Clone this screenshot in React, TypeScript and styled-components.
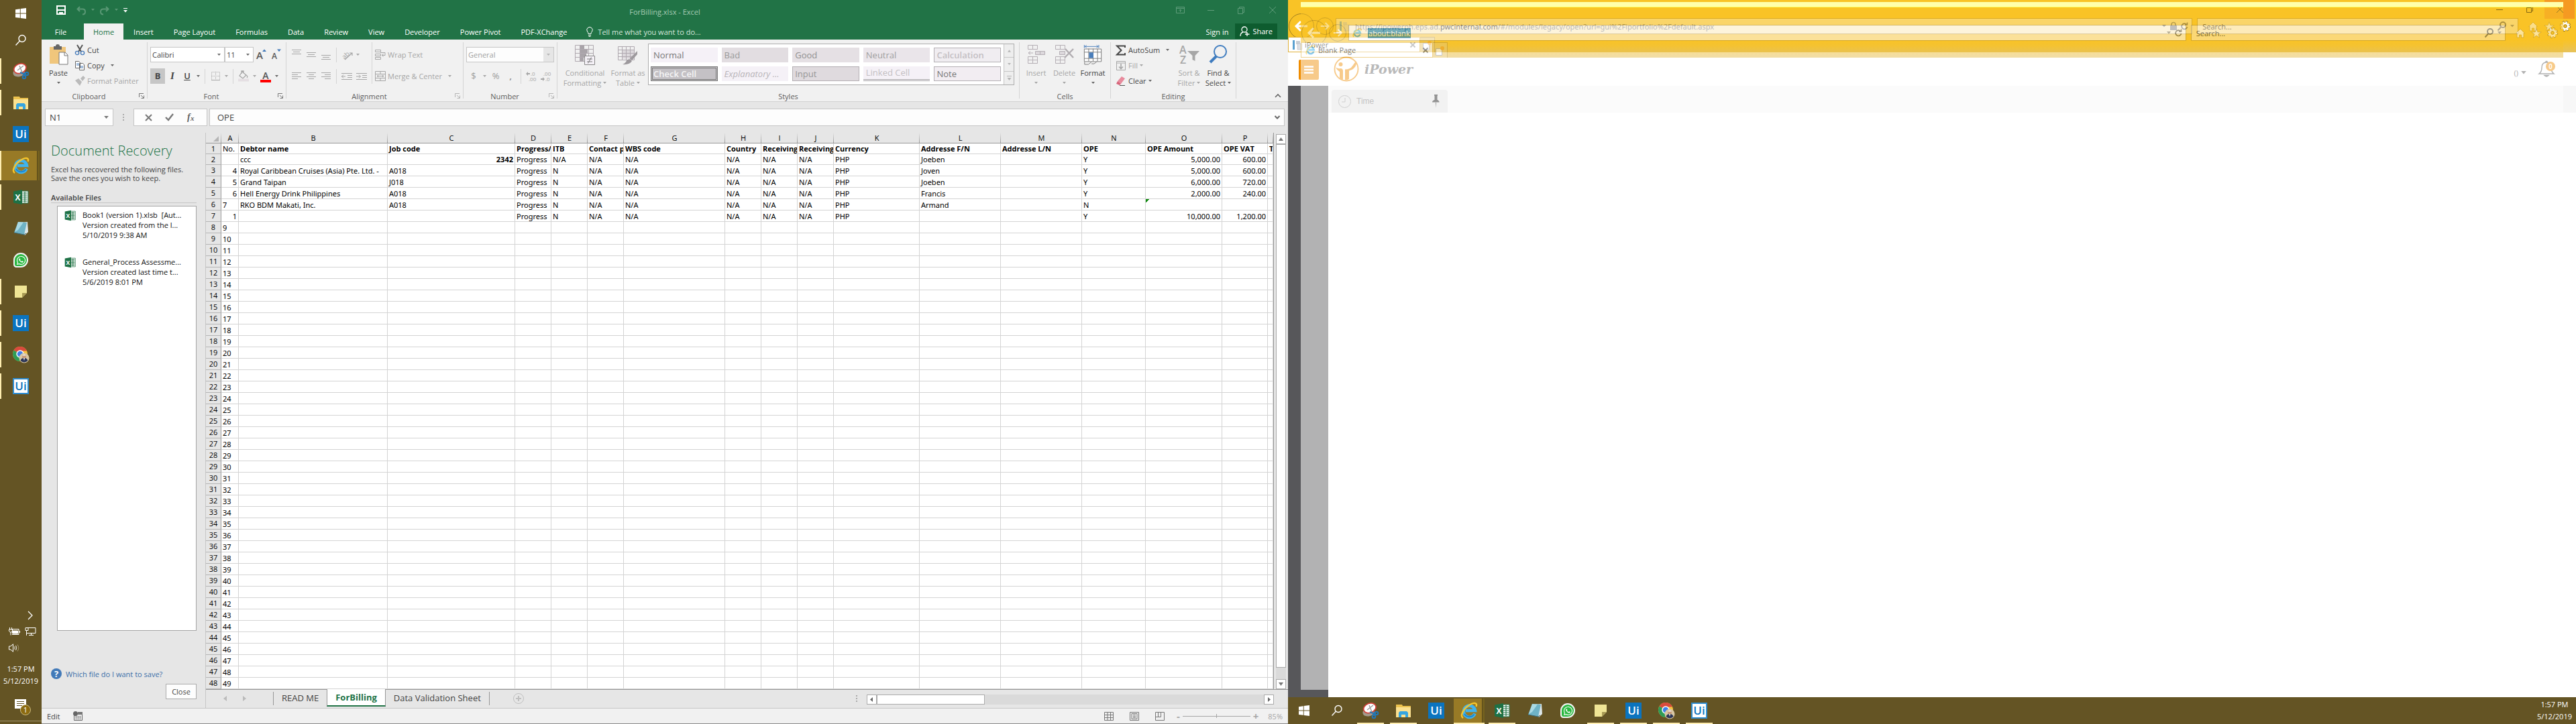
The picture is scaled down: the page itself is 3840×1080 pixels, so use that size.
import React from "react";
import styled, { createGlobalStyle, css } from "styled-components";
import { FaWhatsapp } from "react-icons/fa";

const ui = `"Open Sans", "Noto Sans", sans-serif`;
const cellFont = `"Noto Sans", "Open Sans", sans-serif`;
const ink = "#444444";
const dim = "#a6a6a6";
const line = "#c6c6c6";
const green = "#217346";
const bronze = "#645424";

const Global = createGlobalStyle`
  *, *::before, *::after { box-sizing: border-box; }
  body { margin: 0; font-family: ${ui}; font-size: 11px; line-height: 15px; color: ${ink}; background: #fff; }
  button, input, select { font: inherit; color: inherit; margin: 0; padding: 0; border: 0; background: none; border-radius: 0; }
  h1, h2, p, ul { margin: 0; padding: 0; font-size: inherit; font-weight: inherit; }
  ul { list-style: none; }
  svg { display: block; flex: none; overflow: visible; }
`;

const Desktop = styled.div`
  display: flex;
  min-height: 100vh;
`;
const Screen = styled.div<{ $col?: boolean }>`
  flex: 1 1 0;
  min-width: 0;
  display: flex;
  flex-direction: ${(p) => (p.$col ? "column" : "row")};
`;

/* ---------- shared glyphs ---------- */

const Caret = ({ color = "#666", size = 6 }: { color?: string; size?: number }) => (
  <svg width={size} height={size / 2 + 1} viewBox="0 0 6 4"><path d="M0 0h6L3 3.6z" fill={color} /></svg>
);

const WindowsLogo = () => (
  <svg width="18" height="18" viewBox="0 0 18 18" fill="#fff">
    <path d="M1 3.2l6.8-1v6.3H1zM8.7 2L17 .9v7.6H8.7zM1 9.5h6.8v6.3L1 14.9zM8.7 9.5H17v7.6L8.7 16z" />
  </svg>
);
const SearchGlass = () => (
  <svg width="18" height="18" viewBox="0 0 18 18" fill="none" stroke="#fff" strokeWidth="1.4">
    <circle cx="11" cy="6.5" r="5" /><path d="M7.5 10L1.5 16.5" />
  </svg>
);
const SnipIcon = () => (
  <svg width="26" height="26" viewBox="0 0 26 26">
    <ellipse cx="10" cy="14.5" rx="9" ry="6.5" fill="#a39a8d" transform="rotate(-18 11 14)" />
    <ellipse cx="12" cy="9" rx="9.5" ry="7" fill="#fff" stroke="#cf4038" strokeWidth="1.8" transform="rotate(-22 12.5 9.5)" />
    <path d="M8 12l9-7M11 5l4 10" stroke="#9a9a9a" strokeWidth="1.4" />
    <g fill="none" stroke="#2277b8" strokeWidth="2"><path d="M12 15l5 2 2 3M17 17l4-1" /><circle cx="22" cy="17" r="2.3" /><circle cx="18" cy="22" r="2.3" /></g>
  </svg>
);
const FolderIcon = () => (
  <svg width="24" height="24" viewBox="0 0 24 24">
    <path d="M1 3h9l1 2h12v17H1z" fill="#ecc24e" /><path d="M1 7h22v15H1z" fill="#fbe190" />
    <path d="M5 22v-7l2-2h10l2 2v7h-4v-4H9v4z" fill="#36a5e0" />
  </svg>
);
const EdgeE = ({ size = 26 }: { size?: number }) => (
  <svg width={size} height={size} viewBox="0 0 26 26" fill="none">
    <path d="M21.5 17.5A8.6 8.6 0 1 1 22 13H8" stroke="#3fb4ee" strokeWidth="4.6" />
    <path d="M20.5 18.5A8.6 8.6 0 0 1 6 18" stroke="#1c86cf" strokeWidth="2" />
    <path d="M4 24C-1 21 4 11 12 5.5S26 1 23.5 7" stroke="#f6c52c" strokeWidth="2.4" />
  </svg>
);
const ExcelIcon = ({ size = 24 }: { size?: number }) => (
  <svg width={size} height={size} viewBox="0 0 24 24">
    <path d="M13 3h10v18H13z" fill="#fff" stroke="#217346" />
    <path d="M14 6h8M14 9h8M14 12h8M14 15h8M14 18h8M18 4v16" stroke="#217346" strokeWidth="1.2" />
    <path d="M1 3.5L14 1v22L1 20.5z" fill="#1e7145" />
    <text x="7.5" y="16.5" fill="#fff" fontFamily="Open Sans, sans-serif" fontWeight="700" fontSize="12" textAnchor="middle">X</text>
  </svg>
);
const NotepadIcon = () => (
  <svg width="24" height="24" viewBox="0 0 24 24">
    <path d="M8 3l14-1 1 15-5 5z" fill="#dce6e8" /><path d="M8 2l13 1-4 18-15-3z" fill="#6fb3c6" />
    <path d="M8 2l8 .6L8 14l-5 3z" fill="#a9d9e4" /><path d="M2 18l15 3 3-2" stroke="#3d6d7a" fill="none" />
  </svg>
);
const WhatsRound = styled.span`
  display: grid;
  place-items: center;
  width: 22px;
  height: 22px;
  border-radius: 50% 50% 50% 20%;
  background: #2bb741;
  border: 2px solid #f4f4f4;
  color: #fff;
  font-size: 15px;
`;
const StickyIcon = () => (
  <svg width="20" height="20" viewBox="0 0 20 20"><path d="M1 1h18v11l-7 7H1z" fill="#f0e595" /><path d="M19 12h-7v7z" fill="#a89a55" /></svg>
);
const ChromeIcon = () => (
  <svg width="26" height="26" viewBox="0 0 26 26">
    <circle cx="12" cy="12" r="11" fill="#f3c341" />
    <path d="M12 12L2.5 6.5A11 11 0 0 1 22 7.5L12 7.5z" fill="#d94a3d" />
    <path d="M12 12L2.5 6.5A11 11 0 0 0 11 23l4-6z" fill="#2e9c57" />
    <circle cx="12" cy="12" r="5" fill="#3f80ea" stroke="#fff" strokeWidth="1.5" />
    <circle cx="18" cy="18" r="7.5" fill="#d8c7a4" /><circle cx="18" cy="15.5" r="3" fill="#c79a78" />
    <path d="M15 14.5q3-4 6 0z" fill="#f1f1f1" /><path d="M12.5 22q1-4 5.5-4t5.5 4a7.5 7.5 0 0 1-11 0z" fill="#2c3658" /><path d="M17 18l1 4 1-4z" fill="#fff" />
  </svg>
);
const UiTile = styled.span<{ $outline?: boolean }>`
  display: grid;
  place-items: center;
  width: 24px;
  height: 24px;
  font-size: 17px;
  line-height: 20px;
  font-weight: 600;
  background: #0b74bf;
  color: #fff;
  ${(p) => p.$outline && css`background: #fff; color: #0b74bf; border: 2px solid #2f8cd0;`}
`;

/* ---------- taskbars ---------- */

const TaskButton = styled.button<{ $v?: boolean; $open?: boolean; $active?: boolean; $small?: boolean }>`
  display: grid;
  place-items: center;
  flex: none;
  ${(p) =>
    p.$v
      ? css`
          width: 59px;
          height: ${p.$small ? 40 : 44}px;
          margin-bottom: ${p.$small ? 0 : 3}px;
          padding-left: 3px;
          ${p.$open && css`background: linear-gradient(#ffeeb0, #ffeeb0) 0 50% / 2px 38px no-repeat;`}
          ${p.$active && css`background: linear-gradient(90deg, #ffeeb0 2px, #987a26 2px 55px, #564718 55px 56px, #73601f 56px);`}
        `
      : css`
          width: 46px;
          height: 40px;
          margin-right: 3px;
          ${p.$open && css`background: linear-gradient(#ffeeb0, #ffeeb0) 50% 100% / 40px 2px no-repeat;`}
          ${p.$active && css`background: linear-gradient(#ffeeb0, #ffeeb0) 0 100% / 100% 2px no-repeat, linear-gradient(90deg, #987a26 42px, #564718 42px 43px, #73601f 43px) 0 2px / 100% 38px no-repeat;`}
        `}
`;
const SideBar = styled.nav`
  width: 62px;
  flex: none;
  display: flex;
  flex-direction: column;
  background: ${bronze};
  color: #fff;
`;
const BottomBar = styled.nav`
  height: 40px;
  display: flex;
  align-items: center;
  padding-left: 1px;
  background: ${bronze};
  color: #fff;
`;
const Gap = styled.span<{ $s: number }>`
  flex: 0 0 ${(p) => p.$s}px;
`;

const apps: { name: string; icon: React.ReactNode; open?: boolean; active?: boolean }[] = [
  { name: "Snipping Tool", icon: <SnipIcon />, open: true },
  { name: "File Explorer", icon: <FolderIcon />, open: true },
  { name: "UiPath Studio", icon: <UiTile>Ui</UiTile> },
  { name: "Internet Explorer", icon: <EdgeE />, active: true },
  { name: "Excel", icon: <ExcelIcon />, open: true },
  { name: "Notepad", icon: <NotepadIcon /> },
  { name: "WhatsApp", icon: <WhatsRound><FaWhatsapp /></WhatsRound> },
  { name: "Sticky Notes", icon: <StickyIcon />, open: true },
  { name: "UiPath", icon: <UiTile>Ui</UiTile>, open: true },
  { name: "Chrome", icon: <ChromeIcon />, open: true },
  { name: "UiPath Robot", icon: <UiTile $outline>Ui</UiTile>, open: true },
];

const Tray = styled.div`
  margin-top: auto;
  display: flex;
  flex-direction: column;
`;
const TrayRow = styled.div<{ $end?: boolean }>`
  height: 24px;
  display: flex;
  align-items: center;
  gap: 7px;
  padding: 0 ${(p) => (p.$end ? 13 : 9)}px 0 13px;
  justify-content: ${(p) => (p.$end ? "flex-end" : "flex-start")};
`;
const Clock = styled.time<{ $flat?: boolean }>`
  display: block;
  text-align: center;
  line-height: 18px;
  ${(p) => p.$flat ? css`margin: 0 6px 0 auto;` : css`margin: 11px 0 1px;`}
`;
const Notes = styled.button`
  height: 50px;
  margin-bottom: 4px;
  border-bottom: 1px solid #a4976f;
  display: grid;
  place-items: center;
  padding: 8px 0 0 6px;
`;

const SideTaskbar = () => (
  <SideBar aria-label="Taskbar">
    <TaskButton $v $small aria-label="Start"><WindowsLogo /></TaskButton>
    <TaskButton $v $small aria-label="Search"><SearchGlass /></TaskButton>
    <Gap $s={4} />
    {apps.map((a) => <TaskButton key={a.name} $v $open={a.open} $active={a.active} aria-label={a.name}>{a.icon}</TaskButton>)}
    <Tray>
      <TrayRow $end><svg width="8" height="14" viewBox="0 0 8 14" fill="none" stroke="#fff" strokeWidth="1.3"><path d="M1 1l6 6-6 6" /></svg></TrayRow>
      <TrayRow>
        <svg width="17" height="12" viewBox="0 0 17 12" fill="none" stroke="#fff"><path d="M1.5 0v3M4.5 0v3M.5 3h5v2.5l-1.5 1.5h-2L.5 5.5zM3 7v4.5M5 2.5h10v8H5M16.5 5v3" /><path d="M5.5 5h8v4h-8z" fill="#fff" /></svg>
        <svg width="17" height="14" viewBox="0 0 17 14" fill="none" stroke="#fff"><path d="M5 1.5h11v8H3M1 1.5h4v4H1zM2.5 5.5v7.5M9.5 9.5v3M6 12.5h7" /></svg>
      </TrayRow>
      <TrayRow>
        <svg width="17" height="13" viewBox="0 0 17 13" fill="none" stroke="#fff"><path d="M.5 4h2.5L6.5.8v11.4L3 9H.5zM8.5 4.5q1.5 2 0 4M10.5 3q2.5 3.5 0 7" /><path d="M13 1.5q3.5 5 0 10" stroke="#a4976f" /></svg>
      </TrayRow>
      <Clock>1:57 PM<br />5/12/2019</Clock>
      <Notes aria-label="Notifications">
        <svg width="26" height="26" viewBox="0 0 26 26">
          <path d="M1 1h17v14h-6l-3 4v-4H1z" fill="#fff" /><path d="M4 4.5h11M4 7.5h11M4 10.5h8" stroke={bronze} />
          <circle cx="17" cy="17" r="7.5" fill="#8b6a10" stroke="#c9b97f" />
          <text x="17" y="21" fontSize="11" fill="#fff" fontFamily="Open Sans, sans-serif" textAnchor="middle">1</text>
        </svg>
      </Notes>
    </Tray>
  </SideBar>
);

const BottomTaskbar = () => (
  <BottomBar aria-label="Taskbar">
    <TaskButton aria-label="Start"><WindowsLogo /></TaskButton>
    <TaskButton aria-label="Search"><SearchGlass /></TaskButton>
    <Gap $s={1} />
    {apps.map((a) => <TaskButton key={a.name} $open={a.open} $active={a.active} aria-label={a.name}>{a.icon}</TaskButton>)}
    <Clock $flat>1:57 PM<br />5/12/2019</Clock>
  </BottomBar>
);

/* ---------- Excel title and tabs ---------- */

const Excel = styled.main`
  flex: 1;
  min-width: 0;
  display: flex;
  flex-direction: column;
  background: #e6e6e6;
`;
const TitleBar = styled.header`
  height: 35px;
  display: grid;
  grid-template-columns: 1fr auto 1fr;
  align-items: center;
  background: ${green};
  color: #a6cbb4;
`;
const Quick = styled.div`
  display: flex;
  align-items: center;
  gap: 8px;
  padding: 0 0 5px 22px;
`;
const WinButtons = styled.div`
  display: flex;
  justify-content: flex-end;
  padding-bottom: 5px;
`;
const WinButton = styled.button`
  width: 46px;
  display: grid;
  place-items: center;
`;
const TabStrip = styled.div`
  height: 24px;
  display: flex;
  background: ${green};
  color: #fff;
`;
const Tab = styled.button<{ $on?: boolean; $file?: boolean }>`
  padding: 0 15px;
  ${(p) => p.$file && css`width: 63px; padding: 0 6px 0 0;`}
  ${(p) => p.$on && css`padding: 0 14px; background: #f1f1f1; color: ${green};`}
`;
const Tell = styled.label`
  display: flex;
  align-items: center;
  gap: 7px;
  margin-left: 14px;
  color: #d3e5da;
  input { width: 180px; }
  input::placeholder { color: #d3e5da; opacity: 1; }
`;
const SignIn = styled.button`
  margin-left: auto;
  padding: 0 10px;
`;
const Share = styled.button`
  display: flex;
  align-items: center;
  gap: 4px;
  height: 23px;
  padding: 0 7px;
  margin-right: 16px;
  background: #0e5c2f;
`;

/* ---------- ribbon ---------- */

const Ribbon = styled.section`
  height: 93px;
  display: flex;
  padding-top: 4px;
  background: #f1f1f1;
  border-bottom: 1px solid #d2d2d2;
`;
const GroupBox = styled.div<{ $w?: number }>`
  ${(p) => (p.$w ? css`flex: 0 0 ${p.$w}px;` : css`flex: 1 1 0; min-width: 0;`)}
  display: flex;
  flex-direction: column;
  height: 88px;
`;
const Rule = styled.i<{ $h?: number; $m?: number }>`
  flex: none;
  width: 1px;
  height: ${(p) => p.$h ?? 84}px;
  margin: 0 ${(p) => p.$m ?? 0}px;
  background: #d4d4d4;
`;
const GroupBody = styled.div`
  height: 72px;
  display: flex;
  padding-left: 4px;
`;
const GroupLabel = styled.div`
  display: flex;
  align-items: center;
  height: 16px;
  color: #5f5f5f;
  span { flex: 1; text-align: center; }
  button { width: 16px; display: grid; place-items: center; }
`;
const Group = ({ label, w, launcher, soft, children }: { label: string; w?: number; launcher?: boolean; soft?: boolean; children: React.ReactNode }) => (
  <>
    <GroupBox $w={w}>
      <GroupBody>{children}</GroupBody>
      <GroupLabel>
        <span>{label}</span>
        {launcher && (
          <button aria-label={label + " settings"}>
            <svg width="8" height="8" viewBox="0 0 8 8" fill="none" stroke={soft ? "#b5b5b5" : "#777"}><path d="M.5 6V.5H7M3 3l4 4M7.5 3.5v4h-4" /></svg>
          </button>
        )}
      </GroupLabel>
    </GroupBox>
    <Rule />
  </>
);
const BigButton = styled.button<{ $w: number; $off?: boolean }>`
  flex: 0 0 ${(p) => p.$w}px;
  height: 72px;
  padding-top: 4px;
  display: flex;
  flex-direction: column;
  align-items: center;
  color: ${(p) => (p.$off ? dim : ink)};
  white-space: nowrap;
  > svg:first-child { margin-bottom: 4px; }
  span { display: flex; align-items: center; gap: 3px; min-height: 15px; }
`;
const List = styled.div<{ $w?: number }>`
  display: flex;
  flex-direction: column;
  padding-left: 3px;
  ${(p) => p.$w && css`width: ${p.$w}px;`}
`;
const Item = styled.button<{ $off?: boolean; $far?: boolean }>`
  display: flex;
  align-items: center;
  gap: 3px;
  height: 23px;
  white-space: nowrap;
  color: ${(p) => (p.$off ? dim : ink)};
  > svg:last-child:not(:first-child) { margin-left: ${(p) => (p.$far ? 6 : 0)}px; }
`;
const Rows = styled.div`
  display: flex;
  flex-direction: column;
  gap: 9px;
  padding-top: 7px;
`;
const Row = styled.div<{ $off?: boolean }>`
  display: flex;
  align-items: center;
  height: 23px;
  ${(p) => p.$off && css`color: #9b9b9b;`}
`;
const Tool = styled.button<{ $narrow?: boolean; $on?: boolean }>`
  flex: 0 0 ${(p) => (p.$narrow ? 11 : 22)}px;
  height: 23px;
  display: grid;
  place-items: center;
  font-size: 13px;
  background: ${(p) => (p.$on ? "#c6c6c6" : "none")};
`;
const Drop = ({ color }: { color?: string }) => <Tool $narrow aria-label="More"><Caret color={color} size={5} /></Tool>;
const Combo = styled.span<{ $w: number; $off?: boolean }>`
  display: flex;
  align-items: center;
  width: ${(p) => p.$w}px;
  height: 23px;
  padding-right: 5px;
  background: ${(p) => (p.$off ? "linear-gradient(90deg, #fdfdfd calc(100% - 15px), #e6e6e6 0)" : "#fff")};
  border: 1px solid ${line};
  color: ${(p) => (p.$off ? "#a0a0a0" : ink)};
  select { flex: 1; min-width: 0; appearance: none; padding-left: 2px; opacity: 1; }
`;
const Bold = styled.b<{ $k?: "i" | "u" | "b" }>`
  font-size: 13px;
  ${(p) => p.$k === "i" && css`font-style: italic; font-family: "Liberation Serif", serif; font-size: 15px;`}
  ${(p) => p.$k === "u" && css`text-decoration: underline; font-weight: 600;`}
`;

const Lines = ({ rows, color = dim }: { rows: number[][]; color?: string }) => (
  <svg width="14" height="15" viewBox="0 0 14 15" stroke={color}>{rows.map(([x1, x2, y]) => <path key={y} d={`M${x1} ${y + 0.5}H${x2}`} />)}</svg>
);

const Gallery = styled.div`
  flex: 1;
  min-width: 0;
  display: flex;
  height: 62px;
  margin: 2px 7px 0 3px;
  background: #fff;
  border: 1px solid #adadad;
`;
const Swatches = styled.div`
  flex: 1;
  display: grid;
  grid-template-columns: repeat(5, 1fr);
  grid-auto-rows: 22px;
  gap: 6px;
  padding: 5px 4px 5px 3px;
`;
const Swatch = styled.button<{ $bg: string; $fg: string; $edge?: string }>`
  text-align: left;
  padding-left: 4px;
  font-size: 13px;
  white-space: nowrap;
  background: ${(p) => p.$bg};
  color: ${(p) => p.$fg};
  ${(p) => p.$edge === "solid" && css`border: 1px solid #b4b0b4; padding-left: 3px;`}
  ${(p) => p.$edge === "double" && css`border: 3px double #777; padding-left: 1px; line-height: 16px; font-weight: 600;`}
  ${(p) => p.$edge === "under" && css`border-bottom: 3px double #aaa;`}
  ${(p) => p.$edge === "calc" && css`border: 1px solid #b4b0b4; padding-left: 3px; font-weight: 600;`}
  ${(p) => p.$edge === "italic" && css`font-style: italic;`}
`;
const GalleryNav = styled.div`
  width: 15px;
  display: flex;
  flex-direction: column;
  button { flex: 1; display: grid; place-items: center; background: #eee; border-left: 1px solid ${line}; border-bottom: 1px solid ${line}; }
  button:last-child { border-bottom: 0; }
`;
const styleCells: [string, string, string, string?][] = [
  ["Normal", "#f5f1f7", "#777"], ["Bad", "#e2dde1", "#999"], ["Good", "#e5e0e4", "#8f8f8f"], ["Neutral", "#eae5ea", "#a0a0a0"], ["Calculation", "#f0edf1", "#c3bfc3", "calc"],
  ["Check Cell", "#c4c1c5", "#f5f5f5", "double"], ["Explanatory ...", "#f5f1f7", "#b8b4b8", "italic"], ["Input", "#dfdade", "#969696", "solid"], ["Linked Cell", "#f5f1f7", "#c3bfc3", "under"], ["Note", "#f2edf2", "#777", "solid"],
];

const RibbonEnd = styled.div`
  flex: 0 0 77px;
  display: flex;
  justify-content: flex-end;
  align-items: flex-end;
  padding: 0 10px 4px 0;
`;

const ExcelRibbon = () => (
  <Ribbon aria-label="Home ribbon">
    <Group label="Clipboard" w={157} launcher>
      <BigButton $w={42}>
        <svg width="30" height="30" viewBox="0 0 30 30"><path d="M2 3h24v25H2z" fill="#f0c67c" /><path d="M8 2h3a3 3 0 0 1 6 0h3v5H8z" fill="#666" /><path d="M16 11h9l4 4v14H16z" fill="#fff" stroke="#777" /><path d="M24 11v5h5" fill="none" stroke="#777" /></svg>
        <span>Paste</span><span><Caret size={5} /></span>
      </BigButton>
      <List>
        <Item>
          <svg width="16" height="16" viewBox="0 0 16 16" fill="none"><path d="M4 0l6 10M12 0l-6 10" stroke="#555" strokeWidth="2" /><circle cx="4" cy="12" r="2.6" stroke="#4a7ebb" strokeWidth="1.4" /><circle cx="12" cy="12" r="2.6" stroke="#4a7ebb" strokeWidth="1.4" /></svg>Cut
        </Item>
        <Item $far>
          <svg width="16" height="16" viewBox="0 0 16 16" fill="#fff" stroke="#666"><path d="M1.5 1.5h5l2 2v8h-7zM7.5 4.5h5l2 2v8h-7z" /><path d="M3 5h4M3 7h4M9 9h4M9 11h4" stroke="#4a7ebb" /></svg>Copy <Caret size={5} />
        </Item>
        <Item $off>
          <svg width="16" height="16" viewBox="0 0 16 16" fill="#bbb"><path d="M1 7l5-3 5 5-3 6zM9 4l4-4 3 3-4 5z" /></svg>Format Painter
        </Item>
      </List>
    </Group>

    <Group label="Font" w={206} launcher>
      <Rows>
        <Row>
          <Combo $w={111}><select aria-label="Font name"><option>Calibri</option></select><Caret size={5} /></Combo>
          <Combo $w={43}><select aria-label="Font size"><option>11</option></select><Caret size={5} /></Combo>
          <Tool aria-label="Grow font"><svg width="16" height="17" viewBox="0 0 16 17"><text x="1" y="15" fontSize="15" fontWeight="600" fill="#555" fontFamily="Open Sans, sans-serif">A</text><path d="M10 4l3-3.5L16 4z" fill="#3f77b8" /></svg></Tool>
          <Tool aria-label="Shrink font"><svg width="16" height="17" viewBox="0 0 16 17"><text x="2" y="15" fontSize="12" fontWeight="600" fill="#555" fontFamily="Open Sans, sans-serif">A</text><path d="M10 .5h6L13 4z" fill="#3f77b8" /></svg></Tool>
        </Row>
        <Row>
          <Tool $on><Bold>B</Bold></Tool><Tool><Bold $k="i">I</Bold></Tool><Tool><Bold $k="u">U</Bold></Tool><Drop />
          <Rule $h={22} $m={4} />
          <Tool aria-label="Borders"><svg width="13" height="13" viewBox="0 0 13 13" stroke={dim} fill="none"><path d="M.5.5h12v12H.5zM6.5 0v13M0 6.5h13" strokeDasharray="1 1" /><path d="M0 12.5h13" /></svg></Tool><Drop color={dim} />
          <Rule $h={22} $m={4} />
          <Tool aria-label="Fill colour"><svg width="16" height="17" viewBox="0 0 16 17" fill="none" stroke={dim} strokeWidth="1.3"><path d="M6 2l6 5-5 5-5-4zM5 5V1h3v3M12 7q3 2 1 4" /><path d="M0 14.5h16" stroke="#e5dfe3" strokeWidth="4" /></svg></Tool><Drop color={dim} />
          <Tool aria-label="Font colour"><svg width="16" height="18" viewBox="0 0 16 18"><text x="8" y="13" fontSize="14" fontWeight="600" fill="#555" textAnchor="middle" fontFamily="Open Sans, sans-serif">A</text><path d="M0 14h16v4H0z" fill="#f00" /></svg></Tool><Drop />
        </Row>
      </Rows>
    </Group>

    <Group label="Alignment" w={263} launcher soft>
      <Rows>
        <Row>
          <Tool aria-label="Top align"><Lines rows={[[0, 14, 0], [2, 12, 3], [0, 14, 6]]} /></Tool>
          <Tool aria-label="Middle align"><Lines rows={[[0, 14, 4], [2, 12, 7], [0, 14, 10]]} /></Tool>
          <Tool aria-label="Bottom align"><Lines rows={[[0, 14, 8], [2, 12, 11], [0, 14, 14]]} /></Tool>
          <Rule $h={22} $m={4} />
          <Tool aria-label="Orientation"><svg width="17" height="16" viewBox="0 0 17 16" stroke={dim} fill="none" strokeWidth="1.2"><path d="M5 15L16 5M12 5h4v4" /><text x="0" y="12" fontSize="10" fill={dim} stroke="none" transform="rotate(-45 6 8)" fontFamily="Open Sans, sans-serif">ab</text></svg></Tool><Drop color={dim} />
        </Row>
        <Row>
          <Tool aria-label="Align left"><Lines rows={[[0, 14, 2], [0, 9, 5], [0, 14, 8], [0, 9, 11]]} /></Tool>
          <Tool aria-label="Center"><Lines rows={[[0, 14, 2], [3, 11, 5], [0, 14, 8], [3, 11, 11]]} /></Tool>
          <Tool aria-label="Align right"><Lines rows={[[0, 14, 2], [5, 14, 5], [0, 14, 8], [5, 14, 11]]} /></Tool>
          <Rule $h={22} $m={4} />
          {["M0 1.5h16M9 4.5h7M9 7.5h7M0 10.5h16M0 6h6M3 3.5L.5 6 3 8.5", "M0 1.5h16M9 4.5h7M9 7.5h7M0 10.5h16M0 6h6M4 3.5L6.5 6 4 8.5"].map((d, i) => (
            <Tool key={d} aria-label={i ? "Increase indent" : "Decrease indent"}><svg width="16" height="12" viewBox="0 0 16 12" stroke={dim} fill="none"><path d={d} /></svg></Tool>
          ))}
        </Row>
      </Rows>
      <Rule $h={62} $m={4} />
      <Rows>
        <Item $off><svg width="16" height="15" viewBox="0 0 16 15" stroke={dim} fill="none"><path d="M.5.5h8v3h-8zM.5 6.5h8v3h-8zM.5 11.5h8v3h-8zM8 4.5h7v4h-4M12.5 6l-2 2.5 2 2" /></svg>Wrap Text</Item>
        <Item $off $far><svg width="16" height="15" viewBox="0 0 16 15" stroke={dim} fill="none"><path d="M.5.5h15v14H.5zM.5 4.5h15M.5 10.5h15M8 .5v4M8 10.5v4M3 7.5h10M5 6L3 7.5 5 9M11 6l2 1.5L11 9" /></svg>Merge &amp; Center <Caret color={dim} size={5} /></Item>
      </Rows>
    </Group>

    <Group label="Number" w={139} launcher soft>
      <Rows>
        <Row><Combo $w={131} $off><select aria-label="Number format" defaultValue="General"><option>General</option></select><Caret color="#b5b5b5" size={5} /></Combo></Row>
        <Row $off>
          <Tool>$</Tool><Drop color={dim} /><Tool>%</Tool><Tool><b>,</b></Tool>
          <Rule $h={22} $m={4} />
          <Tool aria-label="Increase decimal"><svg width="16" height="16" viewBox="0 0 16 16" fill={dim}><text x="7" y="7" fontSize="8" fontFamily="Open Sans, sans-serif">.0</text><text x="4" y="15" fontSize="8" fontFamily="Open Sans, sans-serif">.00</text><path d="M0 4l3-3v2h3v2H3v2z" /></svg></Tool>
          <Tool aria-label="Decrease decimal"><svg width="16" height="16" viewBox="0 0 16 16" fill={dim}><text x="4" y="7" fontSize="8" fontFamily="Open Sans, sans-serif">.00</text><text x="7" y="15" fontSize="8" fontFamily="Open Sans, sans-serif">.0</text><path d="M6 12L3 9v2H0v2h3v2z" /></svg></Tool>
        </Row>
      </Rows>
    </Group>

    <Group label="Styles">
      <BigButton $w={74} $off>
        <svg width="30" height="30" viewBox="0 0 30 30" fill="none" stroke="#b0a9b0"><path d="M.5.5h27v24H.5zM.5 6.5h27M.5 12.5h27M.5 18.5h27M7.5 0v24M20.5 0v24" /><path d="M8 1h6v5H8zM8 7h11v5H8zM8 13h9v5H8zM8 19h5v5H8z" fill="#a9a4a9" stroke="none" /><path d="M14.5 16.5h15v13h-15z" fill="#f5f1f7" stroke="#888" /><path d="M18 21h8M18 25h8M24.5 18.5l-5 9" stroke="#777" /></svg>
        <span>Conditional</span><span>Formatting<Caret color={dim} size={5} /></span>
      </BigButton>
      <BigButton $w={54} $off>
        <svg width="30" height="30" viewBox="0 0 30 30" fill="none" stroke="#b0a9b0"><path d="M6.5 7.5h18v13h-18z" fill="#dcd8dc" stroke="none" /><path d="M.5 2.5h24v20H.5zM.5 7.5h24M.5 12.5h24M.5 17.5h24M6.5 2v20M12.5 2v20M18.5 2v20" /><path d="M29 9v5l-8 9-3-3zM17 21l4 3q-3 6-14 5 5-2 6-6z" fill="#9d999d" stroke="none" /></svg>
        <span>Format as</span><span>Table<Caret color={dim} size={5} /></span>
      </BigButton>
      <Gallery>
        <Swatches>{styleCells.map(([t, bg, fg, e]) => <Swatch key={t} $bg={bg} $fg={fg} $edge={e}>{t}</Swatch>)}</Swatches>
        <GalleryNav>
          <button aria-label="Up"><svg width="5" height="4" viewBox="0 0 6 4"><path d="M0 4h6L3 0z" fill="#b5b5b5" /></svg></button>
          <button aria-label="Down"><Caret color="#b5b5b5" size={5} /></button>
          <button aria-label="All styles"><svg width="7" height="7" viewBox="0 0 7 7"><path d="M0 .5h7" stroke="#b5b5b5" /><path d="M.5 3h6L3.5 7z" fill="#b5b5b5" /></svg></button>
        </GalleryNav>
      </Gallery>
    </Group>

    <Group label="Cells" w={135}>
      <BigButton $w={41} $off>
        <svg width="28" height="30" viewBox="0 0 28 30" fill="none" stroke="#b5afb5"><path d="M1.5.5h14v6h-14zM8.5.5v6M1.5 17.5h14v10h-14zM8.5 17.5v10M1.5 22.5h14" /><path d="M12.5 9.5h14v5h-14z" fill="#dcd8dc" /><path d="M19.5 9.5v5M9 12H2M5 9.5L2 12l3 2.5" /></svg>
        <span>Insert</span><span><Caret color={dim} size={5} /></span>
      </BigButton>
      <BigButton $w={43} $off>
        <svg width="28" height="30" viewBox="0 0 28 30" fill="none" stroke="#b5afb5"><path d="M.5.5h14v6H.5zM7.5.5v6M.5 17.5h14v10H.5zM7.5 17.5v10M.5 22.5h14" /><path d="M6.5 9.5h8v5h-8z" fill="#dcd8dc" /><path d="M15 6l12 13M27 6L14 19" stroke="#b0acb0" strokeWidth="2.4" /></svg>
        <span>Delete</span><span><Caret color={dim} size={5} /></span>
      </BigButton>
      <BigButton $w={42}>
        <svg width="28" height="30" viewBox="0 0 28 32" fill="none" stroke="#777"><path d="M.5 6.5h27v20H.5zM.5 11.5h27M.5 21.5h27M7.5 6v20M14.5 6v20M21.5 6v20" fill="#fff" /><path d="M8 12h7v9H8z" fill="#4a7ebb" stroke="none" /><path d="M1 27v4h6l5-4M12 30h4l4-3" /><path d="M1 2.5h22M.5 0v5M23.5 0v5M4 .5L1.5 2.5 4 4.5M20 .5l2.5 2-2.5 2" stroke="#4a7ebb" /></svg>
        <span>Format</span><span><Caret size={5} /></span>
      </BigButton>
    </Group>

    <Group label="Editing" w={186}>
      <List $w={90}>
        <Item $far><svg width="16" height="16" viewBox="0 0 16 16" fill="none" stroke="#444" strokeWidth="2"><path d="M14 4V1.5H2L8.5 8 2 14.5h12V12" /></svg>AutoSum <Caret size={5} /></Item>
        <Item $off><svg width="16" height="16" viewBox="0 0 16 16" fill="none" stroke={dim}><path d="M1.5 1.5h13v13h-13zM1.5 4h13" /><path d="M8 5v7M5 9.5l3 3 3-3" strokeWidth="1.6" /></svg>Fill<Caret color={dim} size={5} /></Item>
        <Item><svg width="16" height="16" viewBox="0 0 16 16"><path d="M9 1l5 3-6 8-5-4z" fill="#e88a9c" /><path d="M3 8l5 4-2 2-5-2z" fill="#d76379" /><path d="M6 14.5h8" stroke="#555" /></svg>Clear<Caret size={5} /></Item>
      </List>
      <BigButton $w={45} $off>
        <svg width="30" height="30" viewBox="0 0 30 30" fill={dim}><text x="0" y="13" fontSize="16" fontWeight="600" fontFamily="Open Sans, sans-serif">A</text><text x="1" y="28" fontSize="16" fontWeight="600" fontFamily="Open Sans, sans-serif">Z</text><path d="M12 9h18l-6.5 7v8l-4-2v-6z" /></svg>
        <span>Sort &amp;</span><span>Filter<Caret color={dim} size={5} /></span>
      </BigButton>
      <BigButton $w={42}>
        <svg width="30" height="30" viewBox="0 0 30 30" fill="none" stroke="#3f7cbf"><circle cx="18" cy="10" r="9" strokeWidth="2" /><path d="M12 17L3 26" strokeWidth="4" /></svg>
        <span>Find &amp;</span><span>Select<Caret size={5} /></span>
      </BigButton>
    </Group>
    <RibbonEnd><button aria-label="Collapse ribbon"><svg width="10" height="8" viewBox="0 0 10 8" fill="none" stroke="#666" strokeWidth="1.6"><path d="M1 6l4-4 4 4" /></svg></button></RibbonEnd>
  </Ribbon>
);

/* ---------- formula bar ---------- */

const FormulaBar = styled.div`
  height: 46px;
  display: flex;
  padding: 10px 5px;
  font-size: 13px;
`;
const Field = styled.div<{ $w?: number }>`
  ${(p) => (p.$w ? css`flex: 0 0 ${p.$w}px;` : css`flex: 1;`)}
  min-width: 0;
  display: flex;
  align-items: center;
  justify-content: space-around;
  height: 26px;
  padding: 0 6px;
  background: #fdfdfd;
  border: 1px solid ${line};
  input { flex: 1; width: 0; min-width: 0; outline: 0; }
`;
const Dots = styled.i<{ $m: string }>`
  flex: none;
  width: 2px;
  height: 11px;
  margin: ${(p) => p.$m};
  background: repeating-linear-gradient(#aaa 0 2px, transparent 2px 4px);
`;

/* ---------- document recovery ---------- */

const Work = styled.div`
  flex: 1;
  display: flex;
  min-height: 0;
`;
const Pane = styled.aside`
  flex: 0 0 245px;
  display: flex;
  flex-direction: column;
  padding: 12px 13px 13px 14px;
  border-right: 1px solid ${line};
`;
const PaneTitle = styled.h1`
  font-size: 20px;
  line-height: 30px;
  font-weight: 300;
  color: ${green};
  white-space: nowrap;
`;
const PaneText = styled.p`
  margin-top: 6px;
  line-height: 13px;
  white-space: nowrap;
`;
const PaneHead = styled.h2`
  margin-top: 15px;
  font-weight: 600;
  border-bottom: 1px solid ${line};
`;
const FileList = styled.ul`
  flex: 1;
  margin: 4px 0 0 9px;
  padding: 5px 10px;
  background: #fff;
  border: 1px solid #a5a5a5;
  color: #111;
`;
const FileRow = styled.li`
  display: flex;
  gap: 10px;
  height: 70px;
  white-space: pre;
`;
const Help = styled.a`
  display: flex;
  align-items: center;
  gap: 6px;
  height: 18px;
  margin-top: 55px;
  color: #3b6ea8;
  text-decoration: none;
`;
const CloseButton = styled.button`
  align-self: flex-end;
  width: 46px;
  height: 23px;
  margin-top: 6px;
  background: #fdfdfd;
  border: 1px solid #ababab;
`;

/* ---------- sheet ---------- */

const SheetArea = styled.div`
  flex: 1;
  min-width: 0;
  display: flex;
  flex-direction: column;
`;
const SheetTop = styled.div`
  display: flex;
`;
const Grid = styled.table`
  flex: 1;
  width: 100%;
  min-width: 0;
  table-layout: fixed;
  border-spacing: 0;
  background: #fff;
  color: #000;
  border-right: 1px solid #979797;
`;
const HeadCell = styled.th`
  height: 16px;
  padding: 0;
  font-weight: 400;
  line-height: 15px;
  background: linear-gradient(#e6e6e6, #999) 100% 0 / 1px 100% no-repeat #e6e6e6;
  border-bottom: 1px solid #999;
`;
const RowHead = styled.th<{ $h: number }>`
  height: ${(p) => p.$h}px;
  padding: 0;
  font-weight: 400;
  line-height: ${(p) => p.$h - 1}px;
  background: #e6e6e6;
  border-right: 1px solid #999;
  border-bottom: 1px solid #b5b5b5;
`;
const Cell = styled.td<{ $right?: boolean; $bold?: boolean; $flag?: boolean }>`
  padding: 0 2px;
  font-family: ${(p) => (p.$bold ? ui : cellFont)};
  line-height: 15px;
  overflow: hidden;
  white-space: nowrap;
  text-align: ${(p) => (p.$right ? "right" : "left")};
  font-weight: ${(p) => (p.$bold ? 700 : 400)};
  border-right: 1px solid #d4d4d4;
  border-bottom: 1px solid #d4d4d4;
  ${(p) => p.$flag && css`background: linear-gradient(135deg, #128a12 4px, transparent 4px);`}
`;
const cols: [string, number?][] = [
  ["A", 26], ["B", 222], ["C", 190], ["D", 54], ["E", 54], ["F", 54], ["G", 151], ["H", 54], ["I", 54], ["J", 54], ["K", 128], ["L", 121], ["M", 121], ["N", 95], ["O", 114], ["P", 68], [""],
];
const rec = (no: string, name: string, job: string, itb: string, who: string, ope: string, amount: string, vat: string) =>
  [no, name, job, "Progress", itb, "N/A", "N/A", "N/A", "N/A", "N/A", "PHP", who, "", ope, amount, vat, ""];
const records: string[][] = [
  ["No.", "Debtor name", "Job code", "Progress/F", "ITB", "Contact pe", "WBS code", "Country", "Receiving", "Receiving", "Currency", "Addresse F/N", "Addresse L/N", "OPE", "OPE Amount", "OPE VAT", "T"],
  rec("", "ccc", "2342", "N/A", "Joeben", "Y", "5,000.00", "600.00"),
  rec("4", "Royal Caribbean Cruises (Asia) Pte. Ltd. -", "A018", "N", "Joven", "Y", "5,000.00", "600.00"),
  rec("5", "Grand Taipan", "J018", "N", "Joeben", "Y", "6,000.00", "720.00"),
  rec("6", "Hell Energy Drink Philippines", "A018", "N", "Francis", "Y", "2,000.00", "240.00"),
  rec("7", "RKO BDM Makati, Inc.", "A018", "N", "Armand", "N", "", ""),
  rec("1", "", "", "N", "", "Y", "10,000.00", "1,200.00"),
];
const rows = Array.from({ length: 48 }, (_, r) => records[r] ?? cols.map((_c, c) => (c === 0 ? String(r + 2) : "")));

const isRight = (r: number, c: number) =>
  (r > 0 && c >= 14) || (c === 0 && [2, 3, 4, 6].includes(r)) || (r === 1 && c === 2);

const VScroll = styled.div`
  flex: 0 0 15px;
  margin: 2px 3px 0;
  display: flex;
  flex-direction: column;
  background: #dadada;
`;
const ScrollBtn = styled.button`
  flex: 0 0 15px;
  min-width: 15px;
  display: grid;
  place-items: center;
  background: #fff;
  border: 1px solid #ababab;
`;
const Thumb = styled.div<{ $f: string }>`
  flex: ${(p) => p.$f};
  background: #fff;
  border: 1px solid #ababab;
`;
const SheetTabs = styled.div`
  height: 28px;
  display: flex;
  border-top: 1px solid #979797;
  font-size: 13px;
`;
const SheetTab = styled.button<{ $on?: boolean }>`
  height: 25px;
  padding: 0 12px;
  ${(p) => p.$on && css`
    margin-top: -1px;
    height: 26px;
    background: #fff;
    color: ${green};
    font-weight: 700;
    border: 1px solid #979797;
    border-top: 0;
    border-bottom: 2px solid ${green};
  `}
`;
const TabArrow = styled.button`
  width: 29px;
  display: grid;
  place-items: center;
  padding-bottom: 2px;
`;
const TabRule = styled.i`
  width: 1px;
  height: 20px;
  margin-top: 3px;
  background: #979797;
`;
const AddSheet = styled.button`
  margin-left: 35px;
  padding-bottom: 1px;
`;
const HScroll = styled.div`
  flex: 0 0 607px;
  height: 15px;
  margin: 7px 21px 0 14px;
  display: flex;
  background: #dadada;
  button:last-child { margin-left: auto; }
`;

/* ---------- status ---------- */

const Status = styled.footer`
  height: 24px;
  display: flex;
  align-items: center;
  padding: 0 8px;
  background: #f1f1f1;
  border-top: 1px solid ${line};
  border-bottom: 1px solid #8a8a8a;
`;
const Views = styled.div`
  display: flex;
  gap: 24px;
  margin: 0 18px 0 auto;
`;
const Zoom = styled.label`
  display: flex;
  align-items: center;
  gap: 4px;
  color: ${dim};
  b { font-size: 15px; }
  span { margin-left: 10px; }
  input {
    appearance: none;
    width: 101px;
    height: 10px;
    background: linear-gradient(${dim}, ${dim}) 50% 50% / 1px 6px no-repeat, linear-gradient(${dim}, ${dim}) 50% 50% / 100% 1px no-repeat;
  }
  input::-webkit-slider-thumb { appearance: none; width: 1px; height: 6px; background: ${dim}; }
`;

const ExcelWindow = () => (
  <Excel>
    <TitleBar>
      <Quick>
        <svg width="14" height="14" viewBox="0 0 14 14" fill="none" stroke="#fff" strokeWidth="2"><path d="M1 1h12v12H1zM2 7h10" /><path d="M4 10h6v4H4z" fill="#fff" stroke="none" /></svg>
        <Gap $s={0} />
        <svg width="14" height="13" viewBox="0 0 14 13" fill="none" stroke="#5a9875" strokeWidth="2"><path d="M5 1L1.5 4.5 5 8M2 4.5h7q4 0 4 4t-4 4" /></svg>
        <Caret color="#5a9875" size={5} />
        <svg width="14" height="13" viewBox="0 0 14 13" fill="none" stroke="#5a9875" strokeWidth="2"><path d="M9 1l3.5 3.5L9 8M12 4.5H5q-4 0-4 4t4 4" /></svg>
        <Caret color="#5a9875" size={5} />
        <svg width="6" height="7" viewBox="0 0 6 7"><path d="M0 .5h6" stroke="#fff" /><path d="M0 3h6L3 6.5z" fill="#fff" /></svg>
      </Quick>
      <span>ForBilling.xlsx - Excel</span>
      <WinButtons>
        {[["Ribbon options", "M.5 1.5h12v9H.5zM.5 3.5h12M6.5 9V5M4.5 7l2-2 2 2"], ["Minimize", "M1 6.5h10"], ["Restore", "M.5 3.5h7v8h-7zM2.5 3V1.5h7v8H8"], ["Close", "M1 1l10 10M11 1L1 11"]].map(([n, d]) => (
          <WinButton key={n} aria-label={n}><svg width="13" height="12" viewBox="0 0 13 12" fill="none" stroke="#5f9c7a"><path d={d} /></svg></WinButton>
        ))}
      </WinButtons>
    </TitleBar>
    <TabStrip>
      <Tab $file>File</Tab><Tab $on>Home</Tab>
      {["Insert", "Page Layout", "Formulas", "Data", "Review", "View", "Developer", "Power Pivot", "PDF-XChange"].map((t) => <Tab key={t}>{t}</Tab>)}
      <Tell>
        <svg width="10" height="15" viewBox="0 0 10 15" fill="none" stroke="#fff"><path d="M3 10.5Q3 8.5 1.5 7a4.2 4.2 0 1 1 7 0Q7 8.5 7 10.5zM3 12.5h4M3.5 14.5h3" /></svg>
        <input aria-label="Tell me" placeholder="Tell me what you want to do..." />
      </Tell>
      <SignIn>Sign in</SignIn>
      <Share><svg width="15" height="16" viewBox="0 0 15 16" fill="none" stroke="#fff" strokeWidth="1.3"><circle cx="7" cy="5" r="4" /><path d="M1 15q0-5 4-6M9 9l1 1M11 9v6M8 12h6.5" /></svg>Share</Share>
    </TabStrip>
    <ExcelRibbon />
    <FormulaBar>
      <Field $w={102}><input aria-label="Name box" defaultValue="N1" /><Caret size={7} color="#777" /></Field>
      <Dots $m="8px 14px 0" />
      <Field $w={110}>
        <svg width="11" height="11" viewBox="0 0 11 11" stroke="#777" strokeWidth="2"><path d="M1 1l9 9M10 1l-9 9" /></svg>
        <svg width="13" height="12" viewBox="0 0 13 12" stroke="#777" strokeWidth="2.4" fill="none"><path d="M1 6l4 4 7-9" /></svg>
        <svg width="14" height="14" viewBox="0 0 14 14" fill="#666"><text x="1" y="11" fontSize="14" fontStyle="italic" fontWeight="700" fontFamily="Liberation Serif, serif">f</text><text x="6" y="12" fontSize="11" fontStyle="italic" fontWeight="700" fontFamily="Liberation Serif, serif">x</text></svg>
      </Field>
      <Gap $s={3} />
      <Field><Gap $s={5} /><input aria-label="Formula" defaultValue="OPE" /><svg width="8" height="6" viewBox="0 0 8 6" fill="none" stroke="#666" strokeWidth="2"><path d="M.5 1L4 4.5 7.5 1" /></svg></Field>
    </FormulaBar>
    <Work>
      <Pane>
        <PaneTitle>Document Recovery</PaneTitle>
        <PaneText>Excel has recovered the following files.<br />Save the ones you wish to keep.</PaneText>
        <PaneHead>Available Files</PaneHead>
        <FileList>
          <FileRow><ExcelIcon size={17} />{"Book1 (version 1).xlsb  [Aut...\nVersion created from the l...\n5/10/2019 9:38 AM"}</FileRow>
          <FileRow><ExcelIcon size={17} />{"General_Process Assessme...\nVersion created last time t...\n5/6/2019 8:01 PM"}</FileRow>
        </FileList>
        <Help href="#help">
          <svg width="16" height="16" viewBox="0 0 16 16"><circle cx="8" cy="8" r="8" fill="#4179b8" /><text x="8" y="13" fontSize="13" fontWeight="700" fill="#fff" textAnchor="middle" fontFamily="Open Sans, sans-serif">?</text></svg>
          Which file do I want to save?
        </Help>
        <CloseButton>Close</CloseButton>
      </Pane>
      <SheetArea>
        <SheetTop>
          <Grid>
            <colgroup><col style={{ width: 23 }} />{cols.map(([n, w]) => <col key={n} style={{ width: w }} />)}</colgroup>
            <thead>
              <tr>
                <HeadCell aria-label="Select all"><svg width="20" height="12" viewBox="0 0 20 12"><path d="M19 3v8h-8z" fill="#b5b5b5" /></svg></HeadCell>
                {cols.map(([n]) => <HeadCell key={n}>{n}</HeadCell>)}
              </tr>
            </thead>
            <tbody>
              {rows.map((row, r) => (
                <tr key={r}>
                  <RowHead $h={r < 2 ? 16 : 17}>{r + 1}</RowHead>
                  {row.map((v, c) => <Cell key={c} $right={isRight(r, c)} $bold={(r === 0 && c > 0) || (r === 1 && c === 2)} $flag={r === 5 && c === 14}>{v}</Cell>)}
                </tr>
              ))}
            </tbody>
          </Grid>
          <VScroll>
            <ScrollBtn aria-label="Scroll up"><svg width="7" height="5" viewBox="0 0 7 5"><path d="M0 5h7L3.5 0z" fill="#777" /></svg></ScrollBtn>
            <Thumb $f="783" /><Gap $s={17} />
            <ScrollBtn aria-label="Scroll down"><svg width="7" height="5" viewBox="0 0 7 5"><path d="M0 0h7L3.5 5z" fill="#777" /></svg></ScrollBtn>
          </VScroll>
        </SheetTop>
        <SheetTabs>
          <Gap $s={14} />
          <TabArrow aria-label="Previous sheets"><svg width="5" height="8" viewBox="0 0 5 8"><path d="M5 0v8L0 4z" fill="#bbb" /></svg></TabArrow>
          <TabArrow aria-label="Next sheets"><svg width="5" height="8" viewBox="0 0 5 8"><path d="M0 0v8l5-4z" fill="#bbb" /></svg></TabArrow>
          <Gap $s={28} /><TabRule />
          <SheetTab>READ ME</SheetTab><SheetTab $on>ForBilling</SheetTab><SheetTab>Data Validation Sheet</SheetTab><TabRule />
          <AddSheet aria-label="New sheet"><svg width="16" height="16" viewBox="0 0 16 16" fill="none" stroke="#c0c0c0"><circle cx="8" cy="8" r="7.5" /><path d="M8 4v8M4 8h8" strokeWidth="2" /></svg></AddSheet>
          <Dots $m="8px 0 0 auto" />
          <HScroll>
            <ScrollBtn aria-label="Scroll left"><svg width="5" height="7" viewBox="0 0 5 7"><path d="M4 0v7L0 3.5z" fill="#666" /></svg></ScrollBtn>
            <Thumb $f="0 0 161px" />
            <ScrollBtn aria-label="Scroll right"><svg width="5" height="7" viewBox="0 0 5 7"><path d="M1 0v7l4-3.5z" fill="#666" /></svg></ScrollBtn>
          </HScroll>
        </SheetTabs>
      </SheetArea>
    </Work>
    <Status>
      Edit<Gap $s={19} />
      <svg width="14" height="14" viewBox="0 0 14 14" fill="none" stroke="#666"><path d="M1.5 5v8.5h12v-12H7" /><path d="M7 1h7v4H7z" fill="#777" stroke="none" /><path d="M3.5 7.5h8M3.5 9.5h8M3.5 11.5h8" strokeDasharray="2 1" /><circle cx="3.5" cy="3.5" r="3.5" fill="#666" stroke="none" /></svg>
      <Views>
        {["M.5.5h13v12H.5zM5 .5v12M9.5.5v12M.5 4.5h13M.5 8.5h13", "M.5.5h13v12H.5zM3 2.5h8v8H3zM5 4.5h4M5 6.5h4M5 8.5h4", "M.5.5h13v12H.5zM.5 7.5h8M8.5.5v7M4.5.5v7"].map((d, i) => (
          <button key={d} aria-label={["Normal view", "Page layout view", "Page break view"][i]}><svg width="14" height="13" viewBox="0 0 14 13" fill="none" stroke="#777"><path d={d} /></svg></button>
        ))}
      </Views>
      <Zoom><b>-</b><input type="range" aria-label="Zoom level" defaultValue={50} /><b>+</b><span>85%</span></Zoom>
    </Status>
  </Excel>
);

/* ---------- browser ---------- */

const BrowserArea = styled.main`
  position: relative;
  flex: 1;
  display: flex;
  flex-direction: column;
  overflow: hidden;
  background: #fff;
`;
const Ghost = styled.section`
  position: absolute;
  inset: 3px 19px 11px 19px;
  display: flex;
  flex-direction: column;
  background: #fff;
  opacity: 0.54;
`;
const Glow = styled.i`
  position: absolute;
  inset: 3px 19px auto 19px;
  height: 8px;
  background: #ffffac;
  border-bottom: 1px solid #ffff5e;
`;
const ChromeBar = styled.header`
  position: relative;
  background: #f9c326;
  color: #4c4c4c;
`;
const AddressRow = styled.div<{ $front?: boolean }>`
  height: 38px;
  display: flex;
  align-items: center;
  gap: 3px;
  padding: ${(p) => (p.$front ? "27px 4px 0 1px" : "20px 4px 0 1px")};
  box-sizing: content-box;
  margin-bottom: ${(p) => (p.$front ? -5 : -3)}px;
`;
const Nav = styled.button<{ $s: number }>`
  flex: 0 0 ${(p) => p.$s}px;
  height: ${(p) => p.$s}px;
  display: grid;
  place-items: center;
  border: 1px solid #a07f22;
  border-radius: 50%;
`;
const Box = styled.div<{ $search?: boolean; $front?: boolean }>`
  ${(p) => (p.$search ? css`flex: 0 0 25%; margin-left: 4px; padding: 0 5px 0 7px;` : css`flex: 1; padding: 0 5px;`)}
  min-width: 0;
  height: 24px;
  display: flex;
  align-items: center;
  gap: 6px;
  color: #333;
  background: ${(p) => (p.$front && !p.$search ? "#fefcfa" : "#fdebba")};
  border: 1px solid #b8922a;
  input { flex: 1; min-width: 0; }
  input::placeholder { color: #111; opacity: 1; }
`;
const Url = styled.span`
  flex: 1;
  white-space: nowrap;
  padding-left: 3px;
  font-family: ${cellFont};
  color: #6a6a6a;
  b { font-weight: 400; color: #000; }
`;
const Selected = styled.span`
  padding: 0 1px;
  background: #0078b8;
  color: #fff;
`;
const Icons = styled.div`
  display: flex;
  margin-left: 7px;
  button { width: 24px; display: grid; place-items: center; }
`;
const TabsRow = styled.div`
  position: relative;
  height: 23px;
  display: flex;
  background: linear-gradient(#f9c326 20%, #e6c25c);
`;
const PageTab = styled.button`
  width: 197px;
  display: flex;
  align-items: center;
  gap: 4px;
  padding: 0 6px;
  background: #fff;
  border: 1px solid #e0b13a;
  color: #111;
  span { flex: 1; text-align: left; }
`;
const NewTab = styled.button`
  width: 22px;
  display: grid;
  place-items: center;
  background: #e9c668;
  border: 1px solid #b8922a;
  border-width: 1px 1px 0 0;
`;
const Controls = styled.div`
  position: absolute;
  top: 0;
  right: 2px;
  display: flex;
  button { width: 45px; height: 28px; display: grid; place-items: center; }
  button:last-child { background: #f59a22; }
`;

const DocGlyph = () => (
  <svg width="14" height="14" viewBox="0 0 14 14"><path d="M0 0h3v14H0z" fill="#5aa0d0" /><path d="M5 1h6v5H5z" fill="#c9ced4" /><path d="M7 5h7v9H7z" fill="#dcdfe4" stroke="#b5bac2" strokeWidth=".6" /></svg>
);
const Glass = () => (
  <svg width="13" height="14" viewBox="0 0 13 14" fill="none" stroke="#555" strokeWidth="2"><circle cx="8" cy="5" r="4" /><path d="M5 8.5l-4.5 5" /></svg>
);
const Refresh = () => (
  <svg width="11" height="13" viewBox="0 0 11 13" fill="none" stroke="#555" strokeWidth="1.6"><path d="M8.5 3.5a4.2 4.2 0 1 0 1 3.5M6 4h3.5V.5" /></svg>
);
const Arrow = ({ flip, s }: { flip?: boolean; s: number }) => (
  <svg width={s} height={s} viewBox="0 0 20 20" fill="none" stroke="#fff" strokeWidth="3"><path d={flip ? "M1 10h16M11 3l7 7-7 7" : "M19 10H3M9 3l-7 7 7 7"} /></svg>
);

const Chrome = ({ front }: { front?: boolean }) => (
  <ChromeBar>
    <AddressRow $front={front}>
      <Nav $s={38} aria-label="Back"><Arrow s={20} /></Nav>
      <Nav $s={26} aria-label="Forward"><Arrow flip s={14} /></Nav>
      <Box $front={front}>
        {front ? <EdgeE size={14} /> : <DocGlyph />}
        {front
          ? <Url><Selected>about:blank</Selected></Url>
          : <Url>https://ipowerph.eps.ad.<b>pwcinternal.com</b>/#/modules/legacy/open?url=gui%2Fiportfolio%2Fdefault.aspx</Url>}
        <Caret color="#777" />
        {!front && <svg width="10" height="12" viewBox="0 0 10 12"><path d="M0 5h10v7H0z" fill="#777" /><path d="M2 6V3.5a3 3 0 0 1 6 0V6" fill="none" stroke="#777" strokeWidth="1.6" /></svg>}
        <Refresh />
      </Box>
      <Box $search $front={front}><input aria-label="Search" placeholder="Search..." /><Glass /><Caret color="#777" /></Box>
      <Icons>
        <button aria-label="Home"><svg width="14" height="15" viewBox="0 0 14 15"><path d="M7 1l6.5 6.5H12V14H8.5v-4h-3v4H2V7.5H.5z" fill="#fff" stroke="#b8922a" strokeWidth=".8" /></svg></button>
        <button aria-label="Favorites"><svg width="16" height="15" viewBox="0 0 16 15"><path d="M8 .8l2 5h5.3l-4.3 3.3 1.6 5.1L8 11l-4.6 3.2L5 9.1.7 5.8H6z" fill="#fff" stroke="#b8922a" strokeWidth=".8" /></svg></button>
        <button aria-label="Tools"><svg width="16" height="16" viewBox="0 0 16 16"><circle cx="8" cy="8" r="6.5" fill="none" stroke="#8a6c1c" strokeWidth="3.2" strokeDasharray="2.8 2.3" /><circle cx="8" cy="8" r="6" fill="none" stroke="#fff" strokeWidth="2.2" strokeDasharray="2.3 2.4" /><circle cx="8" cy="8" r="4" fill="none" stroke="#fff" strokeWidth="2.6" /><circle cx="8" cy="8" r="2.2" fill="#f9c326" stroke="#8a6c1c" strokeWidth=".8" /></svg></button>
      </Icons>
    </AddressRow>
    <TabsRow>
      <PageTab>
        {front ? <EdgeE size={15} /> : <DocGlyph />}
        <span>{front ? "Blank Page" : "iPower"}</span>
        <svg width="8" height="8" viewBox="0 0 8 8" stroke={front ? "#555" : "#888"} strokeWidth="1.8"><path d="M.5.5l7 7M7.5.5l-7 7" /></svg>
      </PageTab>
      <NewTab aria-label="New tab"><svg width="14" height="15" viewBox="0 0 14 15"><path d="M.5 4.5h9v10h-9z" fill="#fff" stroke="#999" /><circle cx="10" cy="4" r="3" fill="#f39c12" /></svg></NewTab>
    </TabsRow>
    {!front && (
      <Controls>
        <button aria-label="Minimize browser"><svg width="10" height="10" viewBox="0 0 10 10" stroke="#000"><path d="M0 5.5h10" /></svg></button>
        <button aria-label="Restore browser"><svg width="10" height="10" viewBox="0 0 10 10" fill="none" stroke="#000"><path d="M.5 2.5h7v7h-7zM2.5 2.5v-2h7v7h-2" /></svg></button>
        <button aria-label="Close browser"><svg width="10" height="10" viewBox="0 0 10 10" stroke="#222"><path d="M0 0l10 10M10 0L0 10" /></svg></button>
      </Controls>
    )}
  </ChromeBar>
);

const AppHeader = styled.div`
  height: 50px;
  display: flex;
  align-items: center;
  padding: 0 31px 0 16px;
`;
const MenuButton = styled.button`
  width: 30px;
  height: 30px;
  display: grid;
  place-items: center;
  margin: 2px 22px 0 0;
  border-radius: 2px;
  background: #ef8c00;
`;
const Brand = styled.span`
  margin-left: 8px;
  font: italic bold 19px "DejaVu Serif", serif;
  color: #666;
`;
const Account = styled.button`
  display: flex;
  align-items: center;
  gap: 4px;
  margin: 10px 18px 0 auto;
  color: #444;
`;
const AppBody = styled.div`
  flex: 1;
  display: flex;
`;
const Rail = styled.div`
  width: 60px;
  background: #57575a;
`;
const Content = styled.div`
  flex: 1;
`;
const PinnedBar = styled.div`
  height: 40px;
  padding: 6px 0 0 5px;
  background: #f7f7f7;
`;
const Pinned = styled.div`
  width: 173px;
  height: 34px;
  display: flex;
  align-items: center;
  gap: 8px;
  padding: 0 12px 0 10px;
  border-radius: 4px 4px 0 0;
  background: #e3e3e3;
  font: 12px "Liberation Sans", sans-serif;
  color: #7c7c7c;
  svg:last-child { margin-left: auto; }
`;

const BrowserWindows = () => (
  <BrowserArea>
    <Chrome />
    <AppHeader>
      <MenuButton aria-label="Menu"><svg width="14" height="12" viewBox="0 0 14 12" stroke="#fff" strokeWidth="2.4"><path d="M0 1.5h14M0 6h14M0 10.5h14" /></svg></MenuButton>
      <svg width="38" height="38" viewBox="0 0 38 38" fill="none" stroke="#ef8c00">
        <circle cx="19" cy="19" r="17.5" strokeWidth="1.8" />
        <circle cx="10.5" cy="12" r="3" fill="#ef8c00" stroke="none" />
        <path d="M3 16.5q4 2.5 7 1.5 4 0 4 4v13q-3 0-5-2.5V23q-4-2-6-6.500zM17 19.500q8 0 11-5 3-5 6-7.500 1 4-1.500 8-3 5-9.500 6.500V34q-3 1.500-6 1.500z" fill="#ef8c00" stroke="none" />
      </svg>
      <Brand>iPower</Brand>
      <Account>()<Caret color="#555" size={8} /></Account>
      <svg width="25" height="26" viewBox="0 0 25 26" fill="none" stroke="#555" strokeWidth="1.4">
        <path d="M1 20q4-3 4-9 0-8 7-8t7 8q0 6 4 9zM9 22.5q3 3 6 0zM10.5 2.5q1.5-2 3 0" />
        <circle cx="18" cy="9" r="7" fill="#ef8c00" stroke="none" />
        <text x="18" y="12.5" fontSize="10" fontWeight="700" fill="#fff" stroke="none" textAnchor="middle" fontFamily="Liberation Sans, sans-serif">0</text>
      </svg>
    </AppHeader>
    <AppBody>
      <Rail />
      <Content>
        <PinnedBar>
          <Pinned>
            <svg width="19" height="19" viewBox="0 0 19 19" fill="none" stroke="#9a9a9a"><circle cx="9.5" cy="9.5" r="9" /><path d="M10 4v6H5" /></svg>
            Time
            <svg width="11" height="20" viewBox="0 0 11 20"><path d="M3 0h5v1.5L7.5 2v6q3 1 3 3.5H0Q0 9 3.5 8V2L3 1.5zM5 12h1l-.5 8z" fill="#111" /></svg>
          </Pinned>
        </PinnedBar>
      </Content>
    </AppBody>
    <Ghost aria-label="Blank Page"><Chrome front /></Ghost>
    <Glow />
  </BrowserArea>
);

export default function App() {
  return (
    <>
      <Global />
      <Desktop>
        <Screen><SideTaskbar /><ExcelWindow /></Screen>
        <Screen $col><BrowserWindows /><BottomTaskbar /></Screen>
      </Desktop>
    </>
  );
}
